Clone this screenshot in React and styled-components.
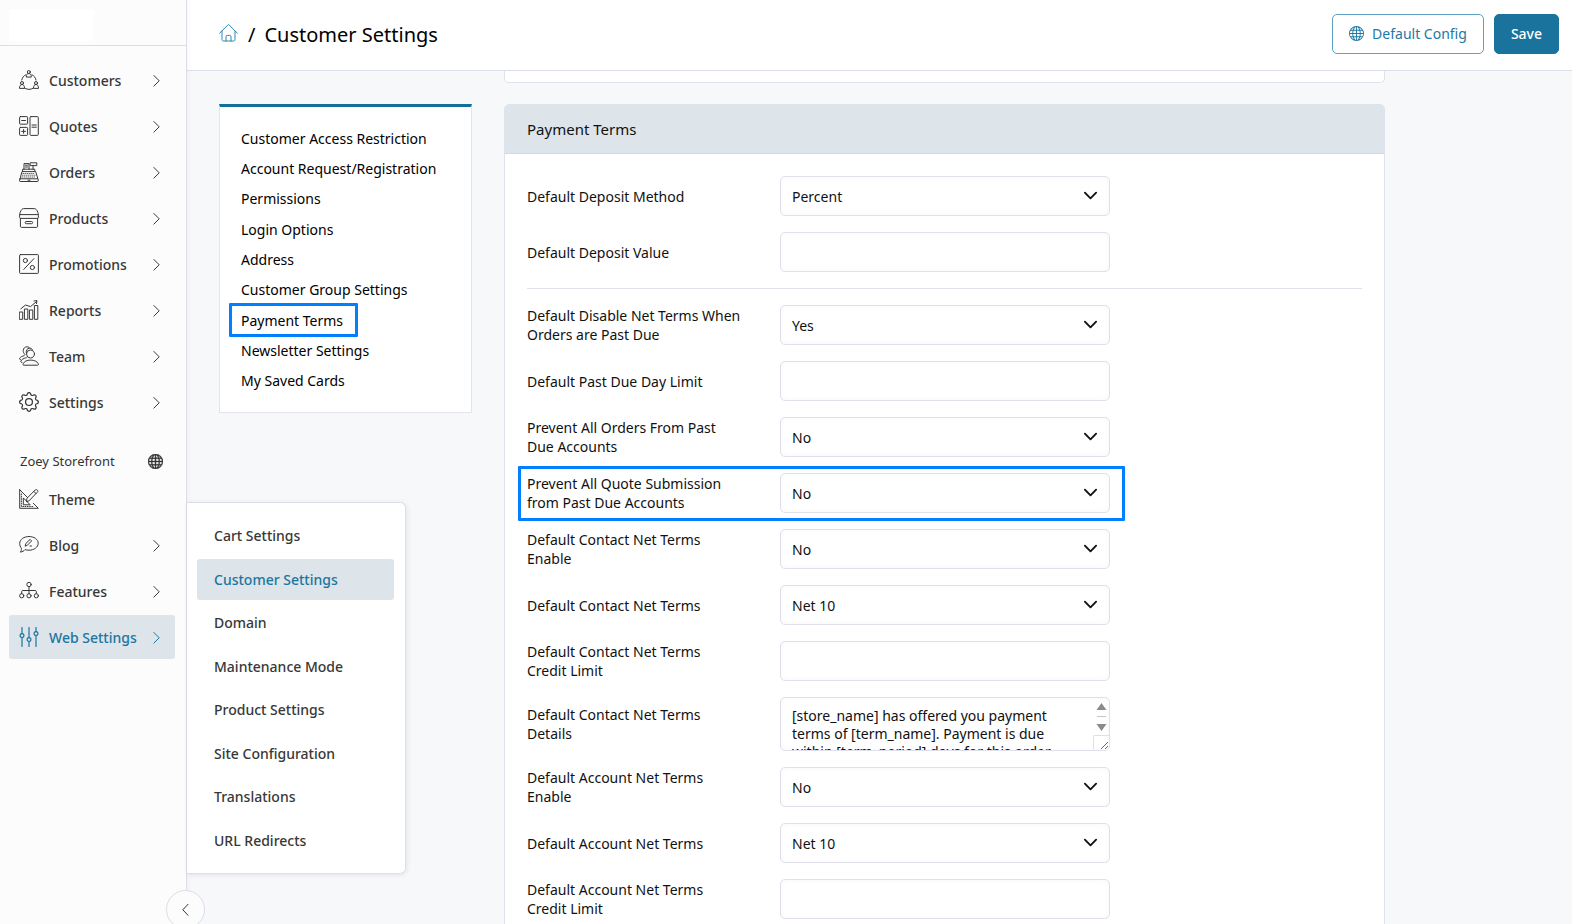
import React, { useState } from 'react';
import styled, { createGlobalStyle, css } from 'styled-components';
import { BsGear, BsGlobe } from 'react-icons/bs';

const GlobalStyle = createGlobalStyle`
  * {
    box-sizing: border-box;
  }

  body {
    margin: 0;
    background: #f7f8fa;
    color: #111;
    font-family: 'Noto Sans', sans-serif;
    font-size: 14px;
  }

  button, input, select, textarea {
    font-family: inherit;
  }
`;

// Styled components
const Shell = styled.div`
  display: flex;
  height: 100vh;
  overflow: hidden;
`;

const Sidebar = styled.aside`
  position: relative;
  z-index: 2;
  flex: 0 0 187px;
  background: #fcfcfc;
  border-right: 1px solid #dcdde9;
  box-shadow: 0 0 6px rgba(50, 60, 90, 0.06);
`;

const LogoArea = styled.div`
  height: 46px;
  padding: 9px;
  border-bottom: 1px solid #dcdde9;
`;

const Logo = styled.div`
  width: 85px;
  height: 32px;
  background: #fff;
`;

const NavList = styled.nav`
  display: flex;
  flex-direction: column;
  gap: 2px;
  padding: 12px 11px 0 9px;
`;

const NavItem = styled.a`
  display: flex;
  align-items: center;
  height: 44px;
  padding: 0 15px 0 10px;
  border-radius: 3px;
  color: ${props => (props.$active ? '#1c769f' : '#383838')};
  background: ${props => (props.$active ? '#dde4ea' : 'transparent')};
  font-weight: 500;
  text-decoration: none;
`;

const NavLabel = styled.span`
  flex: 1;
  padding-left: 10px;
  white-space: nowrap;
`;

const StoreHeading = styled.div`
  display: flex;
  align-items: center;
  justify-content: space-between;
  height: 28px;
  margin-top: 21px;
  padding: 0 12px 0 11px;
  color: #333;
  font-size: 13px;
`;

const Flyout = styled.nav`
  position: absolute;
  left: calc(100% + 1px);
  bottom: 50px;
  display: flex;
  flex-direction: column;
  justify-content: space-between;
  width: 219px;
  height: 372px;
  padding: 12px 11px 12px 10px;
  background: #fff;
  border: 1px solid #dcdfea;
  border-left: none;
  border-radius: 0 6px 6px 0;
  box-shadow: 1px 1px 5px rgba(50, 60, 90, 0.1);
`;

const FlyoutLink = styled.a`
  display: flex;
  align-items: center;
  height: 41px;
  padding: 0 17px;
  border-radius: 3px;
  color: ${props => (props.$active ? '#1c769f' : '#383838')};
  background: ${props => (props.$active ? '#dde4ea' : 'transparent')};
  font-weight: 500;
  text-decoration: none;
`;

const CollapseButton = styled.button`
  position: absolute;
  right: -19px;
  bottom: -5px;
  display: flex;
  align-items: center;
  justify-content: center;
  width: 39px;
  height: 39px;
  padding: 0;
  border: 1px solid #dcdde9;
  border-radius: 50%;
  background: #fcfcfc;
  color: #333;
`;

const Main = styled.main`
  flex: 1;
  min-width: 0;
`;

const TopBar = styled.header`
  display: flex;
  align-items: center;
  height: 71px;
  padding: 0 13px 3px 32px;
  background: #fff;
  border-bottom: 1px solid #dcdfe9;
`;

const HomeLink = styled.a`
  display: flex;
  padding-bottom: 2px;
  color: #2f88b0;
`;

const PageTitle = styled.h1`
  flex: 1;
  display: flex;
  gap: 9px;
  margin: 0 0 0 9px;
  padding-top: 2px;
  color: #000;
  font-size: 20px;
  font-weight: 400;
`;

const Button = styled.button`
  display: flex;
  align-items: center;
  justify-content: center;
  gap: 8px;
  height: 40px;
  margin-left: 10px;
  padding: 0 16px;
  border: 1px solid ${props => (props.$primary ? '#1a739d' : '#5fa1c1')};
  border-radius: 5px;
  background: ${props => (props.$primary ? '#1a739d' : '#fff')};
  color: ${props => (props.$primary ? '#fff' : '#2279a3')};
  font-size: 14px;
  font-weight: ${props => (props.$primary ? 500 : 400)};
`;

const Content = styled.div`
  display: flex;
  gap: 32px;
  padding: 0 32px;
`;

const TabCard = styled.nav`
  display: grid;
  grid-auto-rows: 1fr;
  justify-items: start;
  flex: 0 0 253px;
  align-self: flex-start;
  height: 309px;
  margin-top: 33px;
  padding: 16px 21px;
  background: #fff;
  border: 1px solid #e2e4ee;
  border-top: 3px solid #14709b;
`;

const highlight = css`
  position: relative;

  &::after {
    content: '';
    position: absolute;
    border: 3px solid #0080ff;
    border-radius: 1px;
    pointer-events: none;
  }
`;

const TabLink = styled.a`
  display: flex;
  align-items: center;
  color: #000;
  text-decoration: none;
  white-space: nowrap;

  ${props => props.$marked && css`
    ${highlight}
    &::after {
      inset: -2px -15px -2px -12px;
    }
  `}
`;

const Panels = styled.div`
  flex: 1;
  min-width: 0;
  max-width: 881px;
`;

const PreviousPanel = styled.div`
  height: 12px;
  margin-bottom: 21px;
  background: #fff;
  border: 1px solid #dfe1ec;
  border-top: none;
  border-radius: 0 0 5px 5px;
`;

const Panel = styled.section`
  background: #fff;
  border: 1px solid #dfe1ec;
  border-radius: 5px;
  overflow: hidden;
`;

const PanelTitle = styled.h2`
  display: flex;
  align-items: center;
  height: 49px;
  margin: 0;
  padding: 0 22px;
  background: #dde4ea;
  border-bottom: 1px solid #d3dae3;
  font-size: 15px;
  font-weight: 400;
`;

const PanelBody = styled.form`
  display: flex;
  flex-direction: column;
  align-items: flex-start;
  gap: 16px;
  padding: 22px;
`;

const Divider = styled.hr`
  width: 100%;
  height: 1px;
  margin: 0;
  border: none;
  background: #dfe1ec;
`;

const Row = styled.div`
  display: grid;
  grid-template-columns: 253px 330px;
  align-items: center;

  ${props => props.$marked && css`
    ${highlight}
    &::after {
      inset: -7px -15px -8px -9px;
    }
  `}
`;

const Label = styled.label`
  padding-right: 38px;
  line-height: 19px;
`;

const control = css`
  display: block;
  width: 100%;
  height: 40px;
  padding: 0 11px;
  border: 1px solid #dfe0eb;
  border-radius: 5px;
  background: #fff;
  box-shadow: inset 0 0 6px rgba(0, 0, 0, 0.03);
  color: #111;
  font-size: 14px;
  outline: none;
`;

const Input = styled.input`
  ${control}
`;

const ControlWrap = styled.div`
  position: relative;
`;

const Select = styled.select`
  ${control}
  appearance: none;
`;

const SelectArrow = styled.svg`
  position: absolute;
  right: 12px;
  top: 12px;
  pointer-events: none;
`;

const TextArea = styled.textarea`
  ${control}
  height: 54px;
  padding: 9px 28px 0 11px;
  line-height: 18px;
  scrollbar-width: none;
  resize: vertical;
`;

const ScrollArrows = styled.svg`
  position: absolute;
  top: 1px;
  right: 1px;
  pointer-events: none;
`;

const Svg = ({ children, size = 20, ...rest }) => (
  <svg width={size} height={size} viewBox="0 0 20 20" fill="none" stroke="currentColor" strokeWidth="1" strokeLinejoin="round" strokeLinecap="round" aria-hidden="true" {...rest}>
    {children}
  </svg>
);

const Chevron = ({ left }) => (
  <svg width="7" height="14" viewBox="0 0 7 14" fill="none" stroke="currentColor" strokeWidth="1" aria-hidden="true">
    <path d={left ? 'M6.300 1 .8 6.800l5.500 5.800' : 'M.6 2.200 6.200 7.800.6 13.400'} />
  </svg>
);

const HomeIcon = () => (
  <Svg>
    <path d="M.6 10.2 9.5 1.4l8.9 8.8M3 8.2v8.3c0 1 .5 1.5 1.5 1.5h10c1 0 1.5-.5 1.5-1.5V8.2M7 18v-4.4c0-.8.4-1.2 1.2-1.2h2.6c.8 0 1.2.4 1.2 1.2V18" />
  </Svg>
);

const CustomersIcon = () => (
  <Svg>
    <circle cx="9.8" cy="2" r="1.5" />
    <path d="M7.3 6.7c0-2 .8-3.2 2.5-3.2s2.5 1.2 2.5 3.2z" />
    <circle cx="3" cy="13" r="1.5" />
    <path d="M.5 18c0-2.2.8-3.5 2.5-3.5s2.5 1.3 2.5 3.5z" />
    <circle cx="17" cy="13" r="1.5" />
    <path d="M14.5 18c0-2.2.8-3.5 2.5-3.5s2.5 1.3 2.5 3.5z" />
    <path d="M2.8 10c.5-2.6 1.800-4.200 4-5.200M17 10c-.5-2.600-1.800-4.200-4-5.200M6 18.300c2.600 1.500 5.400 1.500 8 0" />
  </Svg>
);

const QuotesIcon = () => (
  <Svg>
    <rect x=".6" y=".6" width="8" height="7.6" rx=".8" />
    <rect x=".6" y="11.4" width="8" height="8" rx=".8" />
    <rect x="11" y=".6" width="8.3" height="18.8" rx="1" />
    <path d="M2.700 4.500h3.800M2.700 15.400h3.800M4.600 13.500v3.800M13 9h4.300M13 11.200h4.300" />
  </Svg>
);

const OrdersIcon = () => (
  <Svg>
    <rect x=".6" y="16.8" width="18.600" height="2.700" rx=".6" />
    <path d="M1 16.800 3 9.600h13.700l2.200 7.200M3.600 9.600V7.200h12.200v2.400M5 7.200V1.600h5v5.600M6.500 3.200h2M6.500 5h2M11.500.8h6.300v2.800h-6.300zM14 3.600v3.600" />
    <path d="M4 11.500h12M3.500 13.200h13M3 15h14" strokeWidth=".8" strokeDasharray=".6 1.400" />
    <path d="M9 18.200h2" />
  </Svg>
);

const ProductsIcon = () => (
  <Svg>
    <path d="M.6 7.800c0-2.600.8-4.800 2.300-6.400.5-.6 1-.8 1.700-.8h10.800c.7 0 1.200.2 1.700.8 1.500 1.600 2.300 3.800 2.300 6.400v1.600c0 .6-.4 1-1 1H1.600c-.6 0-1-.4-1-1zM1.200 6.600h17.600M1.400 10.400v7.800c0 .8.5 1.200 1.200 1.200h14.800c.7 0 1.200-.4 1.200-1.200v-7.800" />
    <rect x="6.200" y="13.500" width="7.400" height="2.200" rx="1.100" />
  </Svg>
);

const PromotionsIcon = () => (
  <Svg>
    <rect x=".6" y=".6" width="18.8" height="18.8" rx=".8" />
    <circle cx="6.4" cy="6.500" r="2.100" />
    <circle cx="13.400" cy="13.500" r="2.100" />
    <path d="M4.800 15.400 14.900 4.600" />
  </Svg>
);

const ReportsIcon = () => (
  <Svg>
    <path d="M.7 12h3v7.300h-3zM5.800 9h3v10.300h-3zM10.800 10h3v9.300h-3zM15.800 5.500h3v13.800h-3z" />
    <path d="M1.800 8.800 6.500 5l5 1.600 6-5M15 1l3-.4-.5 3" />
  </Svg>
);

const TeamIcon = () => (
  <Svg>
    <circle cx="11.5" cy="8" r="4" />
    <path d="M6 8.600C4.800 7.500 4.200 6 4.200 4.600 4.400 2.200 6 .8 8 .8c1.300 0 2.300.5 3 1.500M7.300 7c-.6-2.500 1-4.800 3.300-4.800 1.300 0 2.200.5 3 1.700" />
    <path d="M4.700 19.200c-.8 0-1-.7-.6-1.400 1.300-2.400 3.500-3.700 7.400-3.700s6.500 1.200 7.900 3.700c.4.700.1 1.400-.7 1.400zM3 16.400c-1 .1-1.500-.4-1.200-1.200 1-1.800 2.700-3 5.500-3.400M1.500 13.500c-.9 0-1.200-.5-.8-1.200.8-1.300 2.300-2.200 4.500-2.600" />
  </Svg>
);

const ThemeIcon = () => (
  <Svg>
    <path d="M.7.7v18.600h18.600l-5-5M.7.700l8 8M4.300 9.300v6.500h6.500z" />
    <path d="M7.500 12.300 8 9.200 16.200 1c.8-.6 1.600-.5 2.200.1s.6 1.400 0 2L10.300 11.600zM14.800 2.400l2.300 2.300" />
    <path d="M2.400 5v12.500h12.500" strokeDasharray=".8 1.500" />
  </Svg>
);

const BlogIcon = () => (
  <Svg>
    <path d="M10 1.500c5 0 9.200 2.800 9.200 6.700 0 4-4.200 7-9.200 7-1.500 0-2.800-.2-4-.6-1 1.300-2.600 2.300-4.700 2.500.9-1 1.300-2.300 1.100-3.900C1.200 12 .7 10.200.7 8.400c0-4 4.200-6.900 9.300-6.900z" />
    <path d="m6.200 10.800.6-2.300 4.300-4.100 1.500 1.500-4.100 4.200zM11 11h1.500" />
  </Svg>
);

const FeaturesIcon = () => (
  <Svg>
    <circle cx="10" cy="3.5" r="2.200" />
    <circle cx="2.700" cy="14.800" r="2.100" />
    <circle cx="10" cy="14.800" r="2.100" />
    <circle cx="17.300" cy="14.800" r="2.100" />
    <path d="M10 5.700v7M2.700 12.700v-2.200c0-.6.400-1 1-1h12.600c.6 0 1 .4 1 1v2.200" />
  </Svg>
);

const SlidersIcon = () => (
  <Svg strokeWidth="1.2">
    <path d="M3 .5v6.300M3 10.500v9M10 .5v10.300M10 14.500v5M17 .5v4.300M17 8.500v11" />
    <circle cx="3" cy="8.600" r="1.900" />
    <circle cx="10" cy="12.600" r="1.900" />
    <circle cx="17" cy="6.600" r="1.900" />
  </Svg>
);

const GearIcon = () => <BsGear size={20} aria-hidden="true" />;

const mainNav = [
  { label: 'Customers', icon: CustomersIcon },
  { label: 'Quotes', icon: QuotesIcon },
  { label: 'Orders', icon: OrdersIcon },
  { label: 'Products', icon: ProductsIcon },
  { label: 'Promotions', icon: PromotionsIcon },
  { label: 'Reports', icon: ReportsIcon },
  { label: 'Team', icon: TeamIcon },
  { label: 'Settings', icon: GearIcon },
];

const storeNav = [
  { label: 'Theme', icon: ThemeIcon, leaf: true },
  { label: 'Blog', icon: BlogIcon },
  { label: 'Features', icon: FeaturesIcon },
  { label: 'Web Settings', icon: SlidersIcon, active: true },
];

const webSettings = [
  'Cart Settings',
  'Customer Settings',
  'Domain',
  'Maintenance Mode',
  'Product Settings',
  'Site Configuration',
  'Translations',
  'URL Redirects',
];

const tabs = [
  'Customer Access Restriction',
  'Account Request/Registration',
  'Permissions',
  'Login Options',
  'Address',
  'Customer Group Settings',
  'Payment Terms',
  'Newsletter Settings',
  'My Saved Cards',
];

const yesNo = ['Yes', 'No'];
const netTerms = ['Net 10', 'Net 30', 'Net 60'];

const fields = [
  { id: 'deposit_method', label: 'Default Deposit Method', options: ['Percent', 'Fixed'], value: 'Percent' },
  { id: 'deposit_value', label: 'Default Deposit Value', value: '' },
  { divider: true, id: 'divider' },
  { id: 'disable_past_due', label: 'Default Disable Net Terms When Orders are Past Due', options: yesNo, value: 'Yes' },
  { id: 'past_due_limit', label: 'Default Past Due Day Limit', value: '' },
  { id: 'prevent_orders', label: 'Prevent All Orders From Past Due Accounts', options: yesNo, value: 'No' },
  { id: 'prevent_quotes', label: 'Prevent All Quote Submission from Past Due Accounts', options: yesNo, value: 'No', marked: true },
  { id: 'contact_enable', label: 'Default Contact Net Terms Enable', options: yesNo, value: 'No' },
  { id: 'contact_terms', label: 'Default Contact Net Terms', options: netTerms, value: 'Net 10' },
  { id: 'contact_limit', label: 'Default Contact Net Terms Credit Limit', value: '' },
  {
    id: 'contact_details',
    label: 'Default Contact Net Terms Details',
    multiline: true,
    value: '[store_name] has offered you payment terms of [term_name]. Payment is due within [term_period] days for this order',
  },
  { id: 'account_enable', label: 'Default Account Net Terms Enable', options: yesNo, value: 'No' },
  { id: 'account_terms', label: 'Default Account Net Terms', options: netTerms, value: 'Net 10' },
  { id: 'account_limit', label: 'Default Account Net Terms Credit Limit', value: '' },
];

function NavLinks({ items }) {
  return items.map(({ label, icon: Icon, leaf, active }) => (
    <NavItem key={label} href="#" $active={active}>
      <Icon />
      <NavLabel>{label}</NavLabel>
      {!leaf && <Chevron />}
    </NavItem>
  ));
}

function Field({ field, value, onChange }) {
  const props = { id: field.id, name: field.id, value, onChange };

  return (
    <Row $marked={field.marked}>
      <Label htmlFor={field.id}>{field.label}</Label>
      {field.options && (
        <ControlWrap>
          <Select {...props}>
            {field.options.map(option => (
              <option key={option} value={option}>{option}</option>
            ))}
          </Select>
          <SelectArrow width="15" height="15" viewBox="0 0 16 16" fill="none" stroke="#111" strokeWidth="2" strokeLinecap="round" strokeLinejoin="round">
            <path d="m2 5 6 6 6-6" />
          </SelectArrow>
        </ControlWrap>
      )}
      {field.multiline && (
        <ControlWrap>
          <TextArea {...props} />
          <ScrollArrows width="16" height="52" viewBox="0 0 16 52" fill="none" aria-hidden="true">
            <path d="M3.500 12 8.500 5l5 7zM3.500 26l5 7 5-7z" fill="#8b8b8b" />
            <path d="M4 18.500h9" stroke="#c4c4c4" />
            <path d="M16 37.500H.5V52" stroke="#e0e0e6" />
          </ScrollArrows>
        </ControlWrap>
      )}
      {!field.options && !field.multiline && <Input type="text" {...props} />}
    </Row>
  );
}

function App() {
  const [formData, setFormData] = useState(() =>
    Object.fromEntries(fields.filter(f => !f.divider).map(f => [f.id, f.value]))
  );

  const handleChange = (e) => {
    setFormData(prev => ({ ...prev, [e.target.name]: e.target.value }));
  };

  return (
    <Shell>
      <GlobalStyle />
      <Sidebar>
        <LogoArea>
          <Logo />
        </LogoArea>
        <NavList>
          <NavLinks items={mainNav} />
          <StoreHeading>
            Zoey Storefront
            <BsGlobe size={15} strokeWidth="0.4" aria-hidden="true" />
          </StoreHeading>
          <NavLinks items={storeNav} />
        </NavList>
        <Flyout>
          {webSettings.map(item => (
            <FlyoutLink key={item} href="#" $active={item === 'Customer Settings'}>{item}</FlyoutLink>
          ))}
        </Flyout>
        <CollapseButton type="button" aria-label="Collapse menu">
          <Chevron left />
        </CollapseButton>
      </Sidebar>

      <Main>
        <TopBar>
          <HomeLink href="#" aria-label="Home">
            <HomeIcon />
          </HomeLink>
          <PageTitle>
            <span>/</span>
            <span>Customer Settings</span>
          </PageTitle>
          <Button type="button">
            <BsGlobe size={15} aria-hidden="true" />
            Default Config
          </Button>
          <Button type="button" $primary>Save</Button>
        </TopBar>

        <Content>
          <TabCard>
            {tabs.map(tab => (
              <TabLink key={tab} href="#" $marked={tab === 'Payment Terms'}>{tab}</TabLink>
            ))}
          </TabCard>

          <Panels>
            <PreviousPanel />
            <Panel>
              <PanelTitle>Payment Terms</PanelTitle>
              <PanelBody>
                {fields.map(field => (
                  field.divider
                    ? <Divider key={field.id} />
                    : <Field key={field.id} field={field} value={formData[field.id]} onChange={handleChange} />
                ))}
              </PanelBody>
            </Panel>
          </Panels>
        </Content>
      </Main>
    </Shell>
  );
}

export default App;
